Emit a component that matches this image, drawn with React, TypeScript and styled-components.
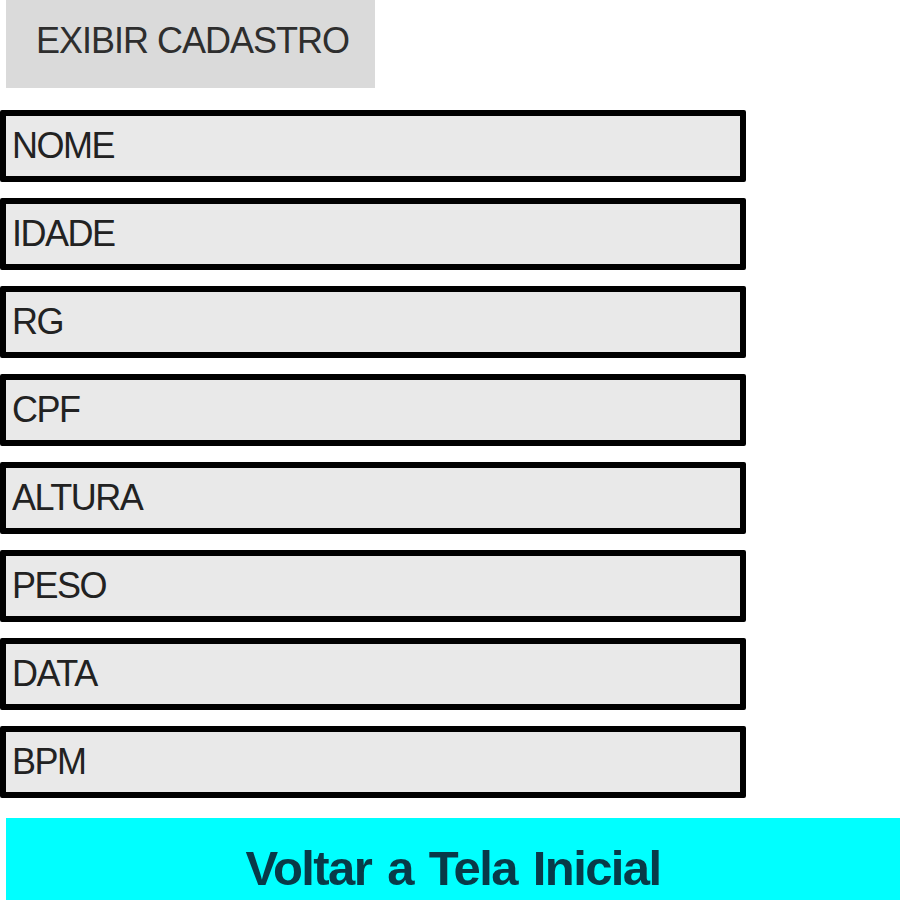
import React from 'react';
import styled, { createGlobalStyle } from 'styled-components';

const GlobalStyle = createGlobalStyle`
  html, body {
    margin: 0;
    padding: 0;
    background: #ffffff;
    overflow: hidden;
  }
`;

const FIELDS = ['NOME', 'IDADE', 'RG', 'CPF', 'ALTURA', 'PESO', 'DATA', 'BPM'];

const App: React.FC = () => {
  return (
    <>
      <GlobalStyle />
      <Page>
        <ShowButton type="button">EXIBIR CADASTRO</ShowButton>

        <FieldList>
          {FIELDS.map(field => (
            <Field key={field} placeholder={field} />
          ))}
        </FieldList>

        <BackButton type="button">Voltar a Tela Inicial</BackButton>
      </Page>
    </>
  );
};

const Page = styled.div`
  width: 900px;
  display: flex;
  flex-direction: column;
  align-items: flex-start;
  font-family: 'Liberation Sans', Arial, sans-serif;
`;

const ShowButton = styled.button`
  flex-shrink: 0;
  margin-left: 6px;
  width: 369px;
  height: 88px;
  padding: 0 0 6px 30px;
  border: none;
  background: #dadada;
  color: #2e2e2e;
  font-family: inherit;
  font-size: 36px;
  letter-spacing: -1px;
  white-space: nowrap;
  text-align: left;
  cursor: pointer;
`;

const FieldList = styled.div`
  flex-shrink: 0;
  margin-top: 22px;
  display: flex;
  flex-direction: column;
  gap: 16px;
`;

const Field = styled.input`
  box-sizing: border-box;
  width: 746px;
  height: 72px;
  border: 6px solid #000;
  border-radius: 2px;
  padding: 0 0 0 6px;
  background: #e9e9e9;
  font-family: inherit;
  font-size: 36px;
  letter-spacing: -1.5px;
  color: #222;
  outline: none;

  &::placeholder {
    color: #222;
    opacity: 1;
  }
`;

const BackButton = styled.button`
  flex-shrink: 0;
  margin: 20px 0 0 6px;
  width: 894px;
  height: 100px;
  padding: 0;
  border: none;
  background: #00ffff;
  color: #083a48;
  font-family: inherit;
  font-size: 49px;
  font-weight: bold;
  letter-spacing: -1.6px;
  word-spacing: 4px;
  text-align: center;
  cursor: pointer;
`;

export default App;
